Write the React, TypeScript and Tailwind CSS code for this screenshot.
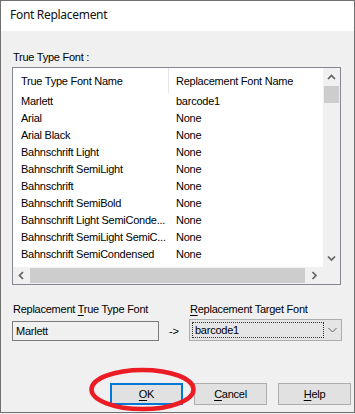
import React from 'react';

const rows: [string, string][] = [
    ['Marlett', 'barcode1'],
    ['Arial', 'None'],
    ['Arial Black', 'None'],
    ['Bahnschrift Light', 'None'],
    ['Bahnschrift SemiLight', 'None'],
    ['Bahnschrift', 'None'],
    ['Bahnschrift SemiBold', 'None'],
    ['Bahnschrift Light SemiConde...', 'None'],
    ['Bahnschrift SemiLight SemiC...', 'None'],
    ['Bahnschrift SemiCondensed', 'None'],
];

// small scrollbar chevrons
function Chevron({ dir }: { dir: 'up' | 'down' | 'left' | 'right' }) {
    const pts = {
        up: '1,5 4.5,1.5 8,5',
        down: '1,1.5 4.5,5 8,1.5',
        left: '5,1 1.5,4.5 5,8',
        right: '1.5,1 5,4.5 1.5,8',
    }[dir];
    const vertical = dir === 'up' || dir === 'down';
    return (
        <svg
            width={vertical ? 9 : 7}
            height={vertical ? 7 : 9}
            viewBox={vertical ? '0 0 9 7' : '0 0 7 9'}
            fill="none"
        >
            <polyline points={pts} stroke="#606060" strokeWidth="1.7" />
        </svg>
    );
}

function Btn({ first, rest, def }: { first: string; rest: string; def?: boolean }) {
    return (
        <div
            className={`w-[73px] h-[22px] bg-[#e1e1e1] flex items-center justify-center leading-[18px] ${
                def ? 'border-2 border-[#0078d7]' : 'border border-[#adadad]'
            }`}
        >
            <span>
                <span className="underline underline-offset-[2px]">{first}</span>
                {rest}
            </span>
        </div>
    );
}

export default function App() {
    return (
        <div className="w-[355px] h-[414px] bg-[#f0f0f0] relative overflow-hidden font-['Liberation_Sans',Arial,sans-serif] text-[11px] tracking-[-0.25px] text-black">
            <div className="w-[355px] h-[413px] border border-[#707070] flex flex-col">
                {/* Title bar */}
                <div className="h-[30px] shrink-0 bg-white pl-[9px] pt-[6px] font-['Noto_Sans',sans-serif] text-[12px] leading-[16px] tracking-[-0.3px] text-[#111]">
                    Font Replacement
                </div>

                {/* Body */}
                <div className="flex-1 bg-[#f0f0f0] flex flex-col pt-[20px]">
                    <div className="ml-[12px] leading-[13px]">True Type Font :</div>

                    {/* List view */}
                    <div className="ml-[11px] mt-[3px] w-[329px] h-[218px] border border-[#828790] bg-white flex flex-col">
                        <div className="flex h-[199px]">
                            <div className="w-[310px] overflow-hidden">
                                <div className="flex h-[25px]">
                                    <div className="w-[155px] pl-[8px] pt-[5px] leading-[17px] whitespace-nowrap">
                                        True Type Font Name
                                    </div>
                                    <div className="w-px bg-[#e5e5e5]" />
                                    <div className="flex-1 pl-[7px] pt-[5px] leading-[17px] whitespace-nowrap">
                                        Replacement Font Name
                                    </div>
                                </div>
                                {rows.map(([name, repl]) => (
                                    <div key={name} className="flex h-[17px] leading-[17px] whitespace-nowrap">
                                        <div className="w-[156px] pl-[8px] overflow-hidden">{name}</div>
                                        <div className="flex-1 pl-[7px]">{repl}</div>
                                    </div>
                                ))}
                            </div>
                            {/* Vertical scrollbar */}
                            <div className="w-[17px] bg-[#f0f0f0] flex flex-col">
                                <div className="h-[17px] flex items-center justify-center pt-[1px]">
                                    <Chevron dir="up" />
                                </div>
                                <div className="mx-[1px] mt-px h-[17px] bg-[#cdcdcd]" />
                                <div className="flex-1" />
                                <div className="h-[17px] flex items-center justify-center pb-[1px]">
                                    <Chevron dir="down" />
                                </div>
                            </div>
                        </div>
                        {/* Horizontal scrollbar */}
                        <div className="flex h-[17px]">
                            <div className="w-[310px] bg-[#f0f0f0] flex">
                                <div className="w-[17px] flex items-center justify-center">
                                    <Chevron dir="left" />
                                </div>
                                <div className="w-[275px] my-[1px] bg-[#cdcdcd]" />
                                <div className="w-px" />
                                <div className="w-[17px] flex items-center justify-center">
                                    <Chevron dir="right" />
                                </div>
                            </div>
                            <div className="w-[17px] bg-[#f0f0f0]" />
                        </div>
                    </div>

                    {/* Replacement fields */}
                    <div className="flex mt-[18px] ml-[11px]">
                        <div className="w-[147px] flex flex-col">
                            <div className="ml-[1px] leading-[13px] whitespace-nowrap">
                                Replacement <span className="underline underline-offset-[2px]">T</span>rue Type Font
                            </div>
                            <div className="mt-[5px] h-[20px] border border-[#7a7a7a] bg-[#f0f0f0] pl-[3px] leading-[18px]">
                                Marlett
                            </div>
                        </div>
                        <div className="w-[30px] pl-[10px] pt-[22px] leading-[13px]">-&gt;</div>
                        <div className="w-[153px] flex flex-col">
                            <div className="ml-[1px] leading-[13px] whitespace-nowrap">
                                <span className="underline underline-offset-[2px]">R</span>eplacement Target Font
                            </div>
                            <div className="mt-[3px] h-[22px] border border-[#adadad] bg-[#e5e5e5] flex items-center p-[2px]">
                                <div className="w-[132px] h-[16px] border border-dotted border-[#333] pl-[2px] leading-[14px]">
                                    barcode1
                                </div>
                                <div className="flex-1 flex justify-center pl-[2px]">
                                    <svg width="9" height="6" viewBox="0 0 9 6" fill="none">
                                        <polyline points="0.5,1 4.5,5 8.5,1" stroke="#606060" strokeWidth="1" />
                                    </svg>
                                </div>
                            </div>
                        </div>
                    </div>

                    {/* Buttons */}
                    <div className="flex justify-end gap-[11px] mt-[42px] pr-[3px]">
                        <Btn first="O" rest="K" def />
                        <Btn first="C" rest="ancel" />
                        <Btn first="H" rest="elp" />
                    </div>
                </div>
            </div>

            {/* Red annotation ellipse around the OK button */}
            <svg className="absolute left-0 top-0 pointer-events-none" width="355" height="414">
                <ellipse cx="142.5" cy="389.5" rx="51" ry="19.5" fill="none" stroke="#ec1c24" strokeWidth="4.5" />
            </svg>
        </div>
    );
}
